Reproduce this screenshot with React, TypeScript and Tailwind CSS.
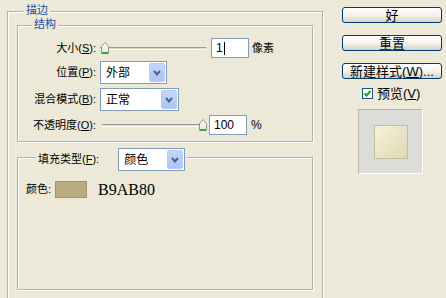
import React from "react";

const Thumb = () => (
  <svg width="8" height="12" viewBox="0 0 8 12">
    <defs>
      <linearGradient id="tg" x1="0" y1="0" x2="0" y2="1">
        <stop offset="0" stopColor="#ffffff" />
        <stop offset="1" stopColor="#e4e4dc" />
      </linearGradient>
    </defs>
    <polygon points="0.5,4.5 4,0.5 7.5,4.5 7.5,11.5 0.5,11.5" fill="url(#tg)" stroke="#8a9a8a" />
    <line x1="1" y1="11" x2="7" y2="11" stroke="#3aa53a" strokeWidth="2" />
  </svg>
);

const Slider = ({ width, pos }: { width: number; pos: number }) => (
  <div className="relative h-[20px] flex items-center" style={{ width }}>
    <div className="w-full h-[3px] border-t border-[#9d9a8c] border-b border-b-white bg-[#dcd9c8]" />
    <div className="absolute top-[4px]" style={{ left: pos }}>
      <Thumb />
    </div>
  </div>
);

const Select = ({ width, value }: { width: number; value: string }) => (
  <div
    className="h-[23px] flex items-center bg-white border border-[#7f9db9]"
    style={{ width }}
  >
    <span className="flex-1 pl-[5px] text-[12px] leading-none">{value}</span>
    <div className="w-[16px] h-[19px] mr-[1px] rounded-[2px] flex items-center justify-center bg-gradient-to-b from-[#c6d6fc] to-[#adc3f5] border border-[#b8cbf5]">
      <svg width="8" height="6" viewBox="0 0 8 6">
        <polyline points="1,1 4,4.5 7,1" fill="none" stroke="#4d6185" strokeWidth="2" />
      </svg>
    </div>
  </div>
);

const Input = ({ value, caret }: { value: string; caret?: boolean }) => (
  <div className="w-[38px] h-[20px] bg-white border border-[#7f9db9] flex items-center pl-[4px] text-[12px] font-['Liberation_Sans',sans-serif]">
    <span>{value}</span>
    {caret && <span className="w-px h-[13px] bg-black ml-[1px]" />}
  </div>
);

const Label = ({ text, k, w = 78 }: { text: string; k: string; w?: number }) => (
  <div className="text-right text-[11px] leading-none" style={{ width: w }}>
    {text}(<span className="underline">{k}</span>):
  </div>
);

const Button = ({ children }: { children: React.ReactNode }) => (
  <div className="w-[100px] h-[16px] rounded-[3px] border border-[#003c74] bg-gradient-to-b from-white via-[#f4f3ee] to-[#d8d3c6] flex items-center justify-center text-[13px] leading-none">
    {children}
  </div>
);

export default function App() {
  return (
    <div className="w-[446px] h-[298px] overflow-hidden bg-[#ece9d8] flex text-black font-['Liberation_Sans','Noto_Sans_CJK_SC',sans-serif]">
      {/* 描边 group */}
      <div className="relative ml-[7px] mt-[11px] w-[316px] h-[300px] border border-[#b5b2a2] shadow-[inset_1px_1px_0_#fff,1px_1px_0_#fff] shrink-0">
        <span className="absolute left-[16px] top-[-7px] px-[2px] bg-[#ece9d8] text-[11px] leading-none text-[#1f4ea6]">
          描边
        </span>

        {/* 结构 group */}
        <div className="relative ml-[9px] mt-[13px] w-[296px] h-[117px] border border-[#b5b2a2] shadow-[inset_1px_1px_0_#fff,1px_1px_0_#fff] pt-[12px]">
          <span className="absolute left-[14px] top-[-7px] px-[2px] bg-[#ece9d8] text-[11px] leading-none text-[#1f4ea6]">
            结构
          </span>

          <div className="flex items-center h-[20px]">
            <Label text="大小" k="S" />
            <div className="ml-[4px]">
              <Slider width={106} pos={1} />
            </div>
            <div className="ml-[5px]">
              <Input value="1" caret />
            </div>
            <span className="ml-[3px] text-[11px]">像素</span>
          </div>

          <div className="flex items-center mt-[3px]">
            <Label text="位置" k="P" />
            <div className="ml-[4px]">
              <Select width={67} value="外部" />
            </div>
          </div>

          <div className="flex items-center mt-[4px]">
            <Label text="混合模式" k="B" />
            <div className="ml-[4px]">
              <Select width={79} value="正常" />
            </div>
          </div>

          <div className="flex items-center h-[20px] mt-[4px]">
            <Label text="不透明度" k="O" />
            <div className="ml-[6px]">
              <Slider width={104} pos={97} />
            </div>
            <div className="ml-[3px]">
              <Input value="100" />
            </div>
            <span className="ml-[4px] text-[12px]">%</span>
          </div>
        </div>

        {/* 填充类型 group */}
        <div className="relative ml-[9px] mt-[15px] w-[296px] h-[133px] border border-[#b5b2a2] shadow-[inset_1px_1px_0_#fff,1px_1px_0_#fff] pt-[23px] pl-[8px]">
          <div className="absolute left-[18px] top-[-10px] px-[2px] bg-[#ece9d8] flex items-center">
            <span className="text-[11px] leading-none">
              填充类型(<span className="underline">F</span>):
            </span>
            <div className="ml-[19px]">
              <Select width={67} value="颜色" />
            </div>
          </div>

          <div className="flex items-center">
            <span className="text-[11px] leading-none">颜色:</span>
            <div className="ml-[4px] w-[32px] h-[17px] bg-[#b9ab80] border border-[#a09470]" />
            <span className="ml-[11px] text-[16px] leading-none font-['Liberation_Serif',serif]">
              B9AB80
            </span>
          </div>
        </div>
      </div>

      {/* right column */}
      <div className="ml-[19px] flex flex-col">
        <div className="mt-[7px]">
          <Button>好</Button>
        </div>
        <div className="mt-[12px]">
          <Button>重置</Button>
        </div>
        <div className="mt-[12px]">
          <Button>
            新建样式(<span className="underline">W</span>)...
          </Button>
        </div>
        <div className="mt-[8px] ml-[20px] flex items-center h-[13px]">
          <div className="w-[11px] h-[11px] bg-white border border-[#1c5180] flex items-center justify-center">
            <svg width="9" height="9" viewBox="0 0 9 9">
              <polyline points="1.5,4.5 3.5,6.5 7.5,2" fill="none" stroke="#21a121" strokeWidth="2" />
            </svg>
          </div>
          <span className="ml-[4px] text-[13px] leading-none">
            预览(<span className="underline">V</span>)
          </span>
        </div>
        <div className="mt-[9px] ml-[16px] w-[65px] h-[65px] bg-[#dcdcd8] border border-[#bdb69c] border-r-white border-b-white flex items-center justify-center">
          <div className="w-[34px] h-[34px] border border-[#c9bd98] bg-gradient-to-br from-[#f6f2dc] to-[#e0d8b4]" />
        </div>
      </div>
    </div>
  );
}
